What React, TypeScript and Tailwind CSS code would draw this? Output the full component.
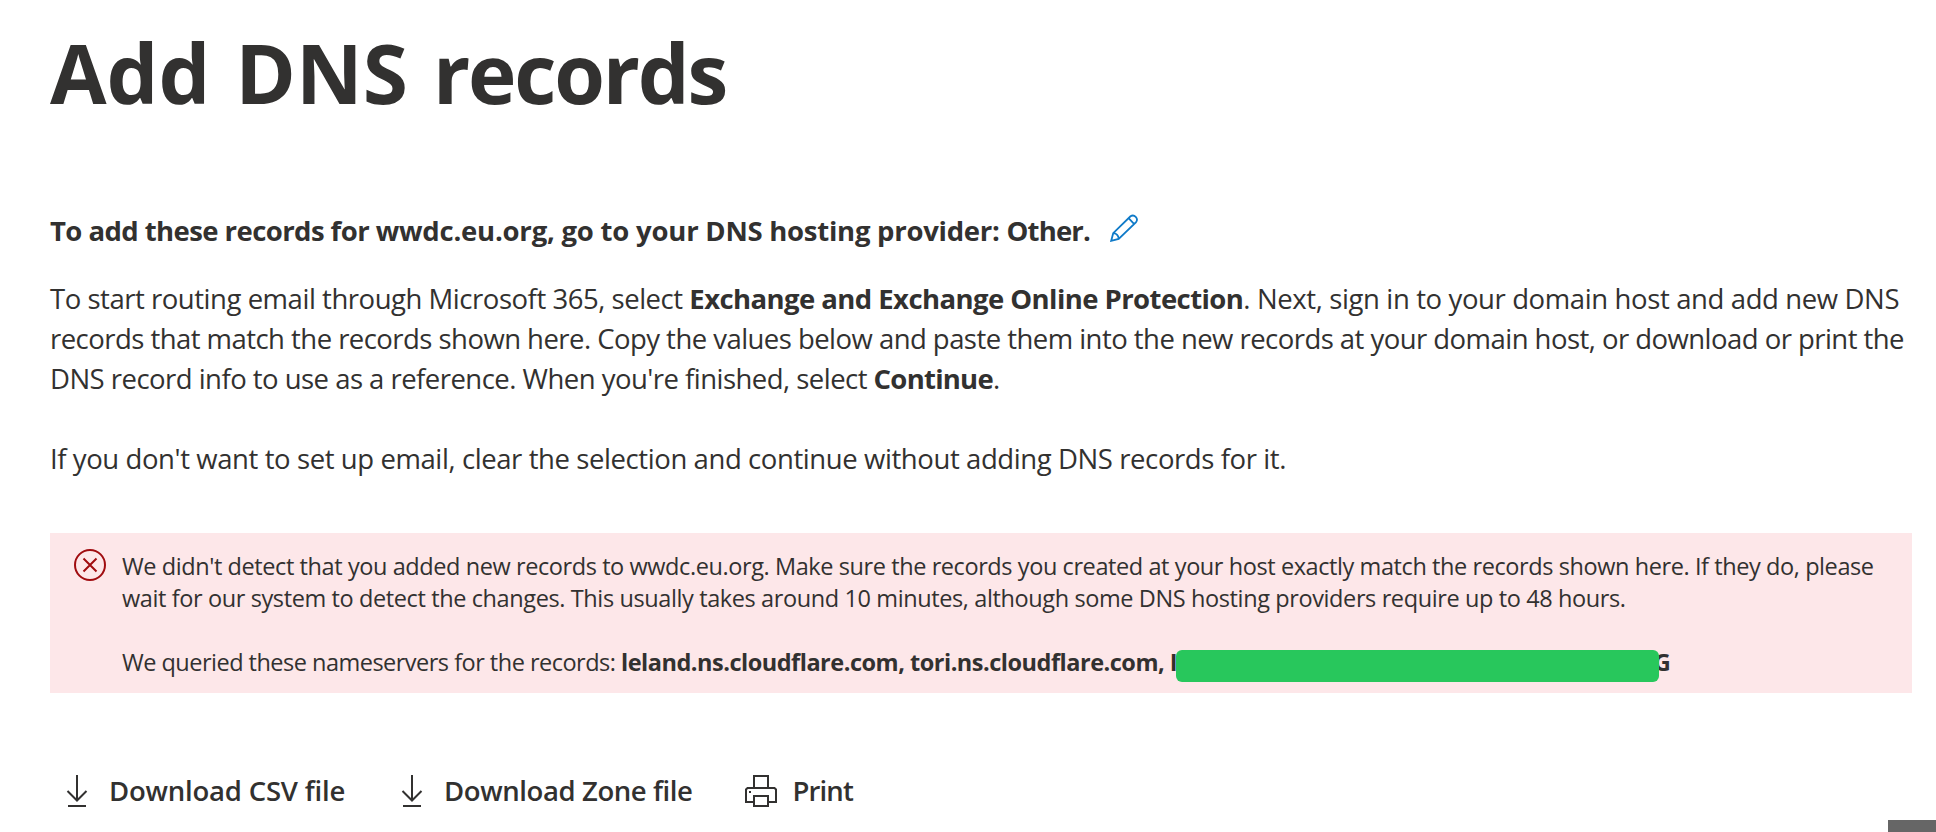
import React from 'react';

const DownloadIcon = () => (
	<svg className="block h-8 w-8 shrink-0" viewBox="0 0 32 32" fill="none" stroke="currentColor" strokeWidth={2}>
		<path d="M16 0v25.5M6.500 16l9.500 9.500 9.500-9.500M7 31h18" />
	</svg>
);

const PrintIcon = () => (
	<svg className="block h-8 w-8 shrink-0" viewBox="0 0 32 32" fill="none" stroke="currentColor" strokeWidth={2}>
		<path d="M9 13V1h14v12M9 27H1V14.500L2.500 13h27l1.500 1.500V27h-8M9 21h14v10H9z" />
		<path d="M4 17h2" />
	</svg>
);

const EditIcon = () => (
	<svg className="block h-7 w-7 shrink-0" viewBox="0 0 28 28" fill="none" stroke="#0f7ac8" strokeWidth={1.8}>
		<path d="M1.200 26.800L3.200 19.200 20.500 2.300a4.100 4.100 0 0 1 5.600 5.800L8.700 24.900zM3.200 19.200a5.500 5.500 0 0 1 5.500 5.700M18.600 4.200l5.400 5.600" />
	</svg>
);

const ErrorIcon = () => (
	<svg className="block h-8 w-8 shrink-0" viewBox="0 0 32 32" fill="none" stroke="#a00c10" strokeWidth={2}>
		<circle cx="16" cy="16" r="15" />
		<path d="M9.500 9.500l13 13M22.500 9.500l-13 13" />
	</svg>
);

interface CommandButtonProps {
	label: string;
	icon: React.ReactNode;
	className?: string;
}

const CommandButton = ({ label, icon, className }: CommandButtonProps) => (
	<button className={`flex h-10 items-center gap-4 font-semibold whitespace-pre ${className ?? ''}`}>
		{icon}
		<span>{label}</span>
	</button>
);

const App = () => {
	return (
		<div className="relative h-[832px] w-full overflow-hidden bg-white pl-[50px] pr-6 font-['Open_Sans',sans-serif] text-[27.500px] leading-10 text-[#323130]">
			<h1 className="pt-[22px] text-[82px] leading-[100px] font-bold whitespace-pre [word-spacing:3.700px]">
				Add DNS <span className="tracking-[-2.200px]">records</span>
			</h1>

			<div className="mt-[89px] flex h-10 items-center">
				<h2 className="font-bold whitespace-pre">
					<span className="tracking-[-0.570px]">To add these records for </span>
					<span className="tracking-[-0.215px]">wwdc.eu.org, go to your </span>
					<span className="tracking-[-0.260px]">DNS hosting provider: </span>
					<span className="tracking-[-0.850px]">Other.</span>
				</h2>
				<button className="ml-5 pb-[7px]" aria-label="Edit">
					<EditIcon />
				</button>
			</div>

			<div className="mt-7 whitespace-pre">
				<p>
					<span className="tracking-[-0.465px]">To start routing email through Microsoft 365, select </span>
					<b className="tracking-[-0.570px]">Exchange and Exchange Online Protection</b>
					<span className="tracking-[-0.380px]">. Next, sign in to your domain host and add new DNS</span>
				</p>
				<p className="tracking-[-0.541px]">records that match the records shown here. Copy the values below and paste them into the new records at your domain host, or download or print the</p>
				<p>
					<span className="tracking-[-0.527px]">DNS record info to use as a reference. When you're finished, select </span>
					<b className="tracking-[-0.750px]">Continue</b>.
				</p>
				<p className="mt-10 tracking-[-0.408px]">If you don't want to set up email, clear the selection and continue without adding DNS records for it.</p>
			</div>

			<div className="mt-[54px] flex h-40 bg-[#fde7e9] pt-4 pl-6 text-[23.500px] leading-8">
				<ErrorIcon />
				<div className="mt-px ml-4 whitespace-pre">
					<p className="tracking-[-0.412px]">We didn't detect that you added new records to wwdc.eu.org. Make sure the records you created at your host exactly match the records shown here. If they do, please</p>
					<p className="tracking-[-0.388px]">wait for our system to detect the changes. This usually takes around 10 minutes, although some DNS hosting providers require up to 48 hours.</p>
					<p className="mt-8 flex">
						<span className="tracking-[-0.510px]">We queried these nameservers for the records: </span>
						<b className="tracking-[-0.485px]">leland.ns.cloudflare.com, tori.ns.cloudflare.com, </b>
						<b className="relative flex w-[501px] justify-between">
							<span>I</span>
							<span>G</span>
							<span className="absolute top-1 left-[6px] h-8 w-[483px] rounded-[6px] bg-[#28c75c]" />
						</b>
					</p>
				</div>
			</div>

			<div className="mt-[78px] flex pl-[11px]">
				<CommandButton label="Download CSV file" icon={<DownloadIcon />} className="tracking-[-0.200px]" />
				<CommandButton label="Download Zone file" icon={<DownloadIcon />} className="ml-[51px] tracking-[-0.400px]" />
				<CommandButton label="Print" icon={<PrintIcon />} className="ml-[52px] tracking-[-0.900px]" />
			</div>

			<div className="absolute right-0 bottom-0 h-3 w-12 bg-[#666666]" />
		</div>
	);
};

export default App;
